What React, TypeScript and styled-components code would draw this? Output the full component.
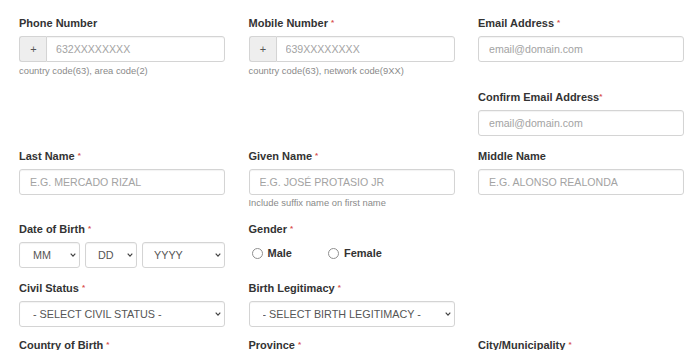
import React from 'react';
import styled, { createGlobalStyle } from 'styled-components';

const GlobalStyle = createGlobalStyle`
  html, body {
    margin: 0;
    padding: 0;
    background: #ffffff;
    font-family: "Liberation Sans", Arial, Helvetica, sans-serif;
  }
`

const Page = styled.div`
    width: 700px;
    height: 350px;
    overflow: hidden;
    box-sizing: border-box;
    padding: 16px 0 0 19px;
`

const Row = styled.div`
    display: grid;
    grid-template-columns: 206px 206px 206px;
    column-gap: 23.5px;
    align-items: start;
`

const Group = styled.div<{ col?: number, mb?: number }>`
    grid-column: ${props => props.col || 'auto'};
    margin-bottom: ${props => props.mb ?? 13}px;
`

const Label = styled.label`
    display: block;
    font-size: 11px;
    line-height: 14px;
    font-weight: bold;
    color: #333333;
    margin-bottom: 6px;
`

const Req = styled.span<{ tight?: boolean }>`
    color: #d9534f;
    font-size: 8px;
    vertical-align: top;
    margin-left: ${props => props.tight ? '0' : '3px'};
`

const Input = styled.input`
    display: block;
    box-sizing: border-box;
    width: 100%;
    height: 26px;
    padding: 0 10px;
    border: 1px solid #d4d4d4;
    border-radius: 3px;
    box-shadow: inset 0 1px 1px rgba(0,0,0,.05);
    font-family: inherit;
    font-size: 10.6px;
    color: #555555;
    outline: none;
    &::placeholder { color: #a3a3a3; }
`

const InputGroup = styled.div`
    display: flex;
    height: 26px;
`

const Addon = styled.span`
    box-sizing: border-box;
    width: 27px;
    flex: none;
    display: flex;
    align-items: center;
    justify-content: center;
    padding-left: 1px;
    background: #eeeeee;
    border: 1px solid #d4d4d4;
    border-right: none;
    border-radius: 3px 0 0 3px;
    font-size: 11px;
    color: #555555;
`

const GroupInput = styled(Input)`
    border-radius: 0 3px 3px 0;
    padding-left: 9px;
    flex: 1;
`

const Help = styled.div<{ mt?: number }>`
    font-size: 9.4px;
    line-height: 12px;
    margin-top: ${props => props.mt ?? 3}px;
    color: #8a8a8a;
`

const SelectWrap = styled.div<{ w?: number }>`
    position: relative;
    width: ${props => props.w ? props.w + 'px' : '100%'};
    flex: none;
`

const Select = styled.select<{ pad?: number }>`
    display: block;
    box-sizing: border-box;
    width: 100%;
    height: 26px;
    appearance: none;
    -webkit-appearance: none;
    background: #ffffff;
    border: 1px solid #d4d4d4;
    border-radius: 3px;
    box-shadow: inset 0 1px 1px rgba(0,0,0,.05);
    padding: 0 0 0 ${props => props.pad ?? 13}px;
    font-family: inherit;
    font-size: 10.8px;
    color: #555555;
    outline: none;
`

const Chevron = styled.svg`
    position: absolute;
    right: 4px;
    top: 11px;
    width: 6px;
    height: 4px;
    pointer-events: none;
`

const DateRow = styled.div`
    display: flex;
    gap: 5px;
`

const Radios = styled.div`
    display: flex;
    align-items: center;
    height: 22px;
    gap: 36px;
    padding-left: 3px;
`

const RadioLabel = styled.label`
    display: flex;
    align-items: center;
    gap: 5px;
    font-size: 11px;
    font-weight: bold;
    color: #333333;
`

const RadioCircle = styled.span`
    box-sizing: border-box;
    width: 11px;
    height: 11px;
    border: 1px solid #8f8f8f;
    border-radius: 50%;
    background: #fff;
`

const Drop: React.FC<{ text: string, w?: number, pad?: number }> = ({ text, w, pad }) => (
    <SelectWrap w={w}>
        <Select pad={pad} defaultValue="x"><option value="x">{text}</option></Select>
        <Chevron viewBox="0 0 6 4"><path d="M0.7 0.7 L3 3.1 L5.3 0.7" fill="none" stroke="#444" strokeWidth="1.2" /></Chevron>
    </SelectWrap>
)

const App: React.FC = () => {
    return (
        <Page>
            <GlobalStyle />
            <Row>
                <Group>
                    <Label>Phone Number</Label>
                    <InputGroup><Addon>+</Addon><GroupInput placeholder="632XXXXXXXX" /></InputGroup>
                    <Help>country code(63), area code(2)</Help>
                </Group>
                <Group>
                    <Label>Mobile Number<Req>*</Req></Label>
                    <InputGroup><Addon>+</Addon><GroupInput placeholder="639XXXXXXXX" /></InputGroup>
                    <Help>country code(63), network code(9XX)</Help>
                </Group>
                <Group>
                    <Label>Email Address<Req>*</Req></Label>
                    <Input placeholder="email@domain.com" />
                </Group>
            </Row>
            <Row>
                <Group col={3}>
                    <Label>Confirm Email Address<Req tight>*</Req></Label>
                    <Input placeholder="email@domain.com" />
                </Group>
            </Row>
            <Row>
                <Group>
                    <Label>Last Name<Req>*</Req></Label>
                    <Input placeholder="E.G. MERCADO RIZAL" />
                </Group>
                <Group>
                    <Label>Given Name<Req>*</Req></Label>
                    <Input placeholder="E.G. JOSÉ PROTASIO JR" />
                    <Help mt={2}>Include suffix name on first name</Help>
                </Group>
                <Group>
                    <Label>Middle Name</Label>
                    <Input placeholder="E.G. ALONSO REALONDA" />
                </Group>
            </Row>
            <Row>
                <Group>
                    <Label>Date of Birth<Req>*</Req></Label>
                    <DateRow>
                        <Drop text="MM" w={61} />
                        <Drop text="DD" w={52} pad={12} />
                        <Drop text="YYYY" w={83} pad={11} />
                    </DateRow>
                </Group>
                <Group>
                    <Label>Gender<Req>*</Req></Label>
                    <Radios>
                        <RadioLabel><RadioCircle />Male</RadioLabel>
                        <RadioLabel><RadioCircle />Female</RadioLabel>
                    </Radios>
                </Group>
            </Row>
            <Row>
                <Group mb={11}>
                    <Label>Civil Status<Req>*</Req></Label>
                    <Drop text="- SELECT CIVIL STATUS -" />
                </Group>
                <Group mb={11}>
                    <Label>Birth Legitimacy<Req>*</Req></Label>
                    <Drop text="- SELECT BIRTH LEGITIMACY -" />
                </Group>
            </Row>
            <Row>
                <Group>
                    <Label>Country of Birth<Req>*</Req></Label>
                </Group>
                <Group>
                    <Label>Province<Req>*</Req></Label>
                </Group>
                <Group>
                    <Label>City/Municipality<Req>*</Req></Label>
                </Group>
            </Row>
        </Page>
    );
}

export default App;
